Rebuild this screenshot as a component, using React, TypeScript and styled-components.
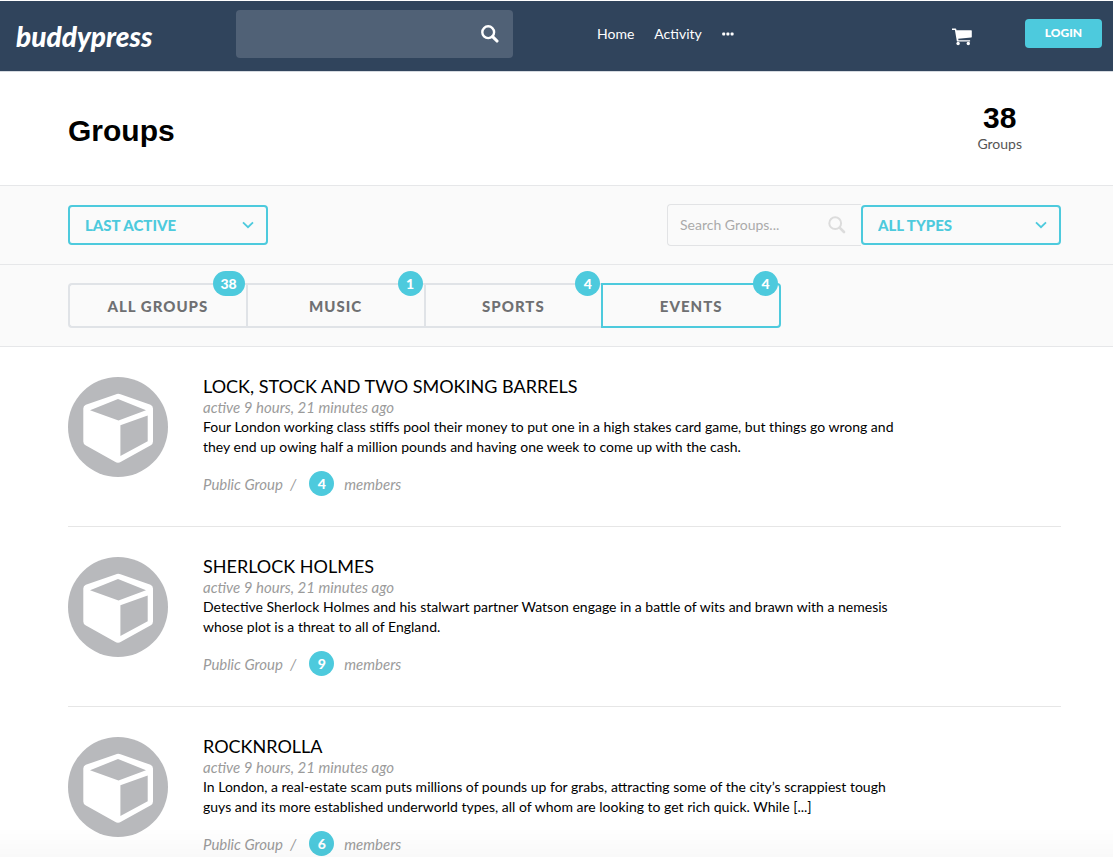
import React from "react";
import styled, { createGlobalStyle, css } from "styled-components";

const accent = "#4dcadd";

const GlobalStyle = createGlobalStyle`
  *, *::before, *::after { box-sizing: border-box; }
  body {
    margin: 0;
    background: #fff;
    color: #000;
    font-family: Lato, "Liberation Sans", sans-serif;
    font-size: 14px;
    line-height: 20px;
  }
  h1, h2, p, ul { margin: 0; padding: 0; }
  ul { list-style: none; }
  a { color: inherit; text-decoration: none; }
  button, input, select { font: inherit; color: inherit; margin: 0; }
`;

const TopBar = styled.header`
  display: flex;
  align-items: center;
  height: 72px;
  padding: 0 11px 0 16px;
  color: #fff;
  background: #30445c;
  border-top: 1px solid #fff;
  border-bottom: 1px solid #d5dae0;
`;

const Logo = styled.a`
  flex: none;
  width: 220px;
  font-size: 28px;
  font-weight: 900;
  font-style: italic;
  line-height: 40px;
`;

const SiteSearch = styled.form`
  display: flex;
  align-items: center;
  flex: 0 1 277px;
  height: 48px;
  margin-bottom: 4px;
  background: #506176;
  border-radius: 4px;
`;

const SiteSearchInput = styled.input`
  flex: 1;
  min-width: 0;
  height: 100%;
  padding: 0 16px;
  background: none;
  border: 0;
  outline: 0;
`;

const IconButton = styled.button`
  display: flex;
  padding: 0;
  margin-right: 14px;
  background: none;
  border: 0;
`;

const MainNav = styled.nav`
  display: flex;
  align-items: center;
  gap: 20px;
  margin: 0 auto 4px 84px;
`;

const NavLink = styled.a`
  display: flex;
  align-items: center;
  height: 20px;
  color: #fff;
`;

const CartLink = styled.a`
  display: flex;
  margin: 2px 53px 0 0;
`;

const LoginButton = styled.button`
  width: 77px;
  height: 29px;
  margin-bottom: 6px;
  padding: 0;
  color: #fff;
  font-size: 12px;
  font-weight: 900;
  background: ${accent};
  border: 0;
  border-radius: 4px;
`;

const Band = styled.section<{ $height: number; $tinted?: boolean }>`
  display: flex;
  justify-content: space-between;
  min-height: ${(p) => p.$height}px;
  padding: 0 52px 0 68px;
  background: ${(p) => (p.$tinted ? "#fafafa" : "#fff")};
  border-bottom: 1px solid #e6e7e9;
`;

const PageTitle = styled.h1`
  padding-top: 41px;
  font: bold 30px/36px "Liberation Sans", Arial, sans-serif;
`;

const Total = styled.p`
  margin: 30px 39px 0 0;
  text-align: center;
  color: #555;
`;

const TotalNumber = styled.strong`
  display: block;
  font: bold 30px/32px "Liberation Sans", Arial, sans-serif;
  color: #000;
`;

const Filters = styled.div`
  display: flex;
  align-items: center;
  height: 42px;
  margin-top: 18px;
`;

const SelectBox = styled.div`
  position: relative;
  width: 200px;
  color: ${accent};

  svg {
    position: absolute;
    top: 16px;
    right: 14px;
    pointer-events: none;
  }
`;

const Select = styled.select`
  display: block;
  appearance: none;
  width: 100%;
  height: 40px;
  padding: 0 15px;
  color: ${accent};
  font-size: 15px;
  font-weight: 900;
  background: #fafafa;
  border: 2px solid ${accent};
  border-radius: 4px;
`;

const GroupSearch = styled.form`
  display: flex;
  align-items: center;
  width: 194px;
  height: 42px;
  background: #fafafa;
  border: 1px solid #e2e3e5;
  border-right: 0;
  border-radius: 4px 0 0 4px;

  button { margin-right: 15px; }
`;

const GroupSearchInput = styled.input`
  flex: 1;
  min-width: 0;
  padding: 0 0 0 12px;
  background: none;
  border: 0;
  outline: 0;
  &::placeholder { color: #aaa; opacity: 1; }
`;

const Tabs = styled.nav`
  display: flex;
  flex: 0 1 713px;
  padding-top: 18px;
`;

const Tab = styled.a<{ $active?: boolean }>`
  position: relative;
  display: flex;
  flex: 1;
  align-items: center;
  justify-content: center;
  height: 45px;
  color: #6f7072;
  font-size: 15px;
  font-weight: 900;
  letter-spacing: 1px;
  border: 2px solid #e0e3e7;
  border-right-width: 0;

  &:first-child { border-radius: 4px 0 0 4px; }
  ${(p) =>
    p.$active &&
    css`
      border: 2px solid ${accent};
      border-radius: 0 4px 4px 0;
    `}
`;

const Count = styled.span`
  display: inline-flex;
  align-items: center;
  justify-content: center;
  min-width: 25px;
  height: 25px;
  padding: 0 8px;
  color: #fff;
  font-size: 14px;
  font-style: normal;
  font-weight: 900;
  letter-spacing: 0;
  background: ${accent};
  border-radius: 13px;
`;

const TabCount = styled(Count)`
  position: absolute;
  top: -14px;
  right: 1px;
`;

const GroupList = styled.ul`
  padding: 0 52px 0 68px;
`;

const GroupItem = styled.li`
  display: flex;
  gap: 35px;
  min-height: 180px;
  padding-top: 30px;
  border-bottom: 1px solid #e6e6e6;

  > svg { flex: none; }
`;

const GroupBody = styled.div`
  max-width: 700px;
`;

const GroupName = styled.h2`
  padding-bottom: 2px;
  font-size: 18px;
  font-weight: 400;
  line-height: 18px;
`;

const Muted = styled.p`
  color: #9b9b9b;
  font-size: 15px;
  font-style: italic;
`;

const Meta = styled(Muted)`
  display: flex;
  align-items: center;
  margin-top: 14px;
`;

const Kind = styled.span`
  margin-right: 13px;
`;

const Members = styled.span`
  margin-left: 10px;
`;

const BottomShade = styled.div`
  position: fixed;
  inset: auto 0 0;
  height: 30px;
  background: linear-gradient(rgba(0, 0, 0, 0), rgba(0, 0, 0, 0.025));
  pointer-events: none;
`;

const Magnifier = ({ color, width }: { color: string; width: number }) => (
  <svg width="18" height="18" viewBox="0 0 18 18" fill="none" stroke={color} strokeWidth={width} aria-hidden="true">
    <circle cx="7.2" cy="7.2" r="5.9" />
    <path d="M11.6 11.6L16 16" strokeLinecap="round" strokeWidth={width + 0.7} />
  </svg>
);

const Chevron = () => (
  <svg width="12" height="8" viewBox="0 0 12 8" fill="none" stroke={accent} strokeWidth="1.8" aria-hidden="true">
    <path d="M1 1.3L6 6.2L11 1.3" />
  </svg>
);

const Cart = () => (
  <svg width="20" height="18" viewBox="0 0 20 18" aria-hidden="true">
    <path
      fill="#fff"
      d="M0 .6h3.6q.5 0 .6.5l.3 1.1h14.7q.6 0 .6.6v6q0 .5-.5.6L6.2 10.8l.3 1.4h11.6v1.3H5.4q-.5 0-.6-.5L2.9 2H0z"
    />
    <circle cx="6.1" cy="15.5" r="1.7" fill="#fff" />
    <circle cx="16.3" cy="15.5" r="1.7" fill="#fff" />
  </svg>
);

const Dots = () => (
  <svg width="12" height="4" viewBox="0 0 12 4" fill="#fff" aria-hidden="true">
    <rect x="0.2" y="0.5" width="3" height="3" rx="0.9" />
    <rect x="4.4" y="0.5" width="3" height="3" rx="0.9" />
    <rect x="8.6" y="0.5" width="3" height="3" rx="0.9" />
  </svg>
);

const Avatar = () => (
  <svg width="100" height="100" viewBox="0 0 100 100" aria-hidden="true">
    <circle cx="50" cy="50" r="50" fill="#b8b9bc" />
    <path
      fill="#fff"
      d="M47.5 17.4Q50 16 52.5 17.2L82.5 27.8Q85 28.9 85 31.5V64.5Q85 67 82.8 68.3L53 84.8Q50 86.5 47 84.8L17.5 68.3Q15.3 67 15.3 64.5V31.5Q15.3 28.9 17.8 27.8Z"
    />
    <path fill="#b8b9bc" d="M50 22L78 33.2L50.5 43.5L22 33.2ZM52.4 48.3L79.7 38.6V64.2L52.4 79Z" />
  </svg>
);

const tabs = [
  { label: "ALL GROUPS", count: 38 },
  { label: "MUSIC", count: 1 },
  { label: "SPORTS", count: 4 },
  { label: "EVENTS", count: 4, active: true },
];

const groups = [
  {
    name: "LOCK, STOCK AND TWO SMOKING BARRELS",
    text: "Four London working class stiffs pool their money to put one in a high stakes card game, but things go wrong and they end up owing half a million pounds and having one week to come up with the cash.",
    members: 4,
  },
  {
    name: "SHERLOCK HOLMES",
    text: "Detective Sherlock Holmes and his stalwart partner Watson engage in a battle of wits and brawn with a nemesis whose plot is a threat to all of England.",
    members: 9,
  },
  {
    name: "ROCKNROLLA",
    text: "In London, a real-estate scam puts millions of pounds up for grabs, attracting some of the city’s scrappiest tough guys and its more established underworld types, all of whom are looking to get rich quick. While [...]",
    members: 6,
  },
];

export default function App() {
  return (
    <>
      <GlobalStyle />
      <TopBar>
        <Logo href="#">buddypress</Logo>
        <SiteSearch role="search">
          <SiteSearchInput type="text" aria-label="Search site" />
          <IconButton type="button" aria-label="Search">
            <Magnifier color="#fff" width={2.4} />
          </IconButton>
        </SiteSearch>
        <MainNav>
          <NavLink href="#">Home</NavLink>
          <NavLink href="#">Activity</NavLink>
          <NavLink href="#" aria-label="More"><Dots /></NavLink>
        </MainNav>
        <CartLink href="#" aria-label="Cart"><Cart /></CartLink>
        <LoginButton type="button">LOGIN</LoginButton>
      </TopBar>
      <main>
        <Band $height={114}>
          <PageTitle>Groups</PageTitle>
          <Total><TotalNumber>38</TotalNumber>Groups</Total>
        </Band>
        <Band $height={79} $tinted>
          <Filters>
            <SelectBox>
              <Select aria-label="Order by"><option>LAST ACTIVE</option></Select>
              <Chevron />
            </SelectBox>
          </Filters>
          <Filters>
            <GroupSearch role="search">
              <GroupSearchInput type="text" placeholder="Search Groups..." aria-label="Search Groups" />
              <IconButton type="button" aria-label="Search groups">
                <Magnifier color="#dcdcdc" width={2} />
              </IconButton>
            </GroupSearch>
            <SelectBox>
              <Select aria-label="Group type"><option>ALL TYPES</option></Select>
              <Chevron />
            </SelectBox>
          </Filters>
        </Band>
        <Band $height={82} $tinted>
          <Tabs>
            {tabs.map((tab) => (
              <Tab key={tab.label} href="#" $active={tab.active}>
                {tab.label}
                <TabCount>{tab.count}</TabCount>
              </Tab>
            ))}
          </Tabs>
        </Band>
        <GroupList>
          {groups.map((group) => (
            <GroupItem key={group.name}>
              <Avatar />
              <GroupBody>
                <GroupName>{group.name}</GroupName>
                <Muted>active 9 hours, 21 minutes ago</Muted>
                <p>{group.text}</p>
                <Meta as="div">
                  <Kind>Public Group&nbsp; /</Kind>
                  <Count>{group.members}</Count>
                  <Members>members</Members>
                </Meta>
              </GroupBody>
            </GroupItem>
          ))}
        </GroupList>
      </main>
      <BottomShade />
    </>
  );
}
